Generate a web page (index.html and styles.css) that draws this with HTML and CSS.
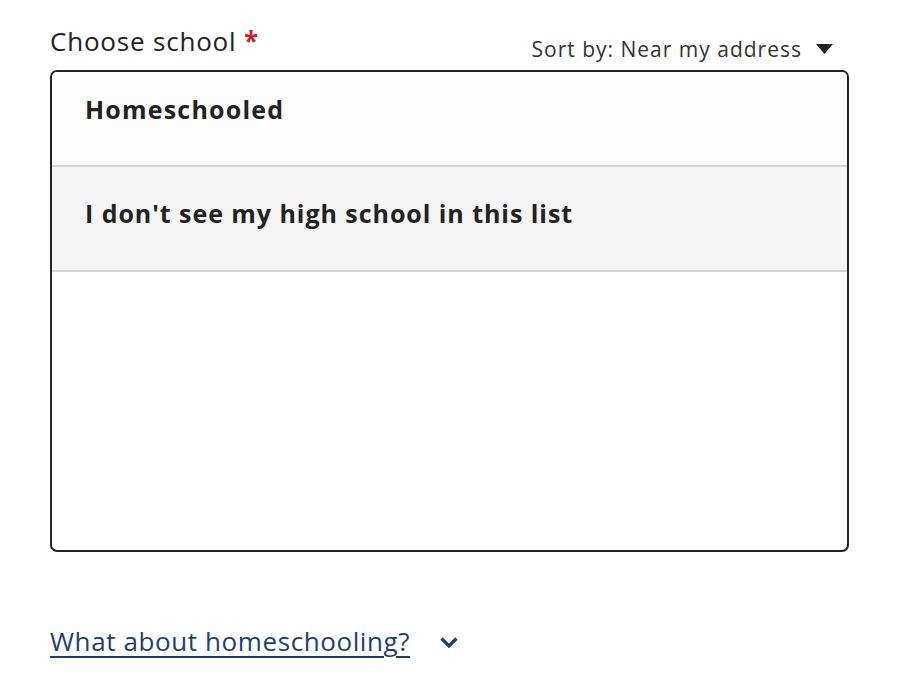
FILE: index.html
```html
<!DOCTYPE html>
<html lang="en">
<head>
  <meta charset="UTF-8">
  <title>Choose school</title>
  <link rel="stylesheet" href="styles.css">
</head>
<body>
  <div class="field">
    <div class="field-head">
      <label class="field-label">Choose school <span class="required">*</span></label>
      <button class="sort-btn">Sort by: Near my address
        <svg width="17" height="10" viewBox="0 0 17 10"><path d="M0 0h17L8.5 10z" fill="#222"/></svg>
      </button>
    </div>

    <div class="school-list">
      <div class="school-row first">Homeschooled</div>
      <div class="school-row shaded">I don't see my high school in this list</div>
    </div>
  </div>

  <div class="help">
    <a href="#" class="help-link">What about homeschooling?</a>
    <svg class="chevron" width="20" height="13" viewBox="0 0 20 13"><path d="M2.5 2.5l7.5 7.5 7.5-7.5" fill="none" stroke="#1d3f6e" stroke-width="3.2"/></svg>
  </div>
</body>
</html>
```

FILE: styles.css
```css
body {
  margin: 0;
  padding: 24px 49px 0 50px;
  font-family: "Open Sans", "Noto Sans", sans-serif;
  color: #222;
  background: white;
}

.field-head {
  display: flex;
  justify-content: space-between;
  align-items: flex-end;
  height: 46px;
}

.field-label {
  font-size: 26px;
  line-height: 34px;
  letter-spacing: 0.8px;
  align-self: flex-start;
}

.required {
  color: #d0212e;
  font-weight: bold;
}

.sort-btn {
  border: none;
  background: none;
  padding: 0 16px 0 0;
  font-family: inherit;
  font-size: 21px;
  letter-spacing: 1px;
  color: #333;
  display: flex;
  align-items: center;
  gap: 14px;
  margin-bottom: 7px;
}

.school-list {
  border: 2px solid #222;
  border-radius: 7px;
  height: 478px;
  overflow: hidden;
  background: white;
}

.school-row {
  padding: 0 33px;
  height: 103px;
  display: flex;
  align-items: center;
  font-size: 25px;
  font-weight: bold;
  letter-spacing: 1.2px;
  border-bottom: 2px solid #d4d4d4;
  box-sizing: border-box;
  background: #fdfdfd;
}

.school-row.first {
  height: 95px;
  align-items: flex-start;
  padding-top: 20px;
}

.school-row.shaded {
  background: #f5f5f5;
  height: 105px;
  padding-bottom: 12px;
  letter-spacing: 0.95px;
}

.help {
  margin-top: 71px;
  display: flex;
  align-items: center;
  gap: 29px;
}

.help-link {
  font-size: 26px;
  letter-spacing: 0.6px;
  color: #1d3f6e;
  text-decoration: underline;
  text-underline-offset: 5px;
  text-decoration-thickness: 2px;
}

.chevron {
  margin-top: 2px;
}
```
